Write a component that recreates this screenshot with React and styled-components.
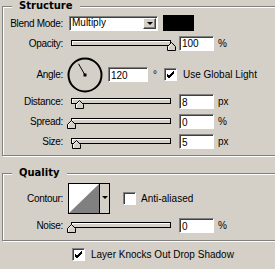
import React from "react";
import styled, { createGlobalStyle } from "styled-components";

const GlobalStyle = createGlobalStyle`
  html, body {
    margin: 0;
    padding: 0;
    overflow: hidden;
    background: #d4d0c8;
  }
  body {
    font-family: "Liberation Sans", Arial, sans-serif;
    font-size: 10px;
    color: #000;
  }
`;

const Panel = styled.div`
  width: 310px;
  display: flex;
  flex-direction: column;
`;

const Group = styled.fieldset`
  margin: ${(p) => p.$mt || 0}px 0 0 2px;
  padding: ${(p) => p.$pt}px 0 ${(p) => p.$pb}px 0;
  border: 1px solid #808080;
  box-shadow: 1px 1px 0 #fff, inset 1px 1px 0 #fff;
  min-width: 0;
`;

const Legend = styled.legend`
  margin-left: 9px;
  padding: 0 7px;
  font-family: "DejaVu Sans", sans-serif;
  font-weight: bold;
  font-size: 10px;
  line-height: 12px;
  background: #d4d0c8;
`;

const Row = styled.div`
  display: flex;
  align-items: center;
  height: ${(p) => p.$h}px;
  margin-top: ${(p) => p.$mt || 0}px;
  padding-left: ${(p) => p.$pl || 0}px;
`;

const Label = styled.span`
  flex: none;
  width: 60px;
  text-align: right;
  letter-spacing: -0.3px;
  margin-right: ${(p) => p.$gap ?? 6}px;
  white-space: nowrap;
`;

const Select = styled.div`
  position: relative;
  width: 89px;
  height: 15px;
  box-sizing: border-box;
  background: #fff;
  border-top: 1px solid #808080;
  border-left: 1px solid #808080;
  border-bottom: 1px solid #fff;
  border-right: 1px solid #fff;
  box-shadow: inset 1px 1px 0 #404040;
  display: flex;
  align-items: center;
  padding-left: 2px;
`;

const SelectText = styled.span`
  flex: 1;
  line-height: 12px;
`;

const DropButton = styled.div`
  width: 13px;
  height: 11px;
  box-sizing: border-box;
  margin-right: 1px;
  background: #d4d0c8;
  border-top: 1px solid #fff;
  border-left: 1px solid #fff;
  border-right: 1px solid #404040;
  border-bottom: 1px solid #404040;
  box-shadow: inset -1px -1px 0 #808080;
  display: flex;
  align-items: center;
  justify-content: center;
`;

const Arrow = styled.span`
  width: 0;
  height: 0;
  border-left: 3px solid transparent;
  border-right: 3px solid transparent;
  border-top: 3px solid #000;
`;

const Swatch = styled.div`
  width: 31px;
  height: 16px;
  margin-left: 5px;
  background: #000;
`;

const SliderBox = styled.div`
  position: relative;
  flex: none;
  width: 110px;
  height: 15px;
  margin-right: 2px;
  padding-top: 4px;
  box-sizing: border-box;
`;

const Track = styled.div`
  width: 100px;
  height: 6px;
  margin-left: 4px;
  box-sizing: border-box;
  border: 1px solid #000;
  background: #d4d0c8;
  box-shadow: inset 1px 1px 0 #fff;
`;

const Thumb = styled.svg`
  position: absolute;
  top: 6px;
  width: 9px;
  height: 9px;
`;

const NumInput = styled.input`
  width: ${(p) => p.$w || 35}px;
  height: 15px;
  box-sizing: border-box;
  margin: 0;
  padding: 1px 0 0 2px;
  background: #fff;
  border-top: 1px solid #808080;
  border-left: 1px solid #808080;
  border-bottom: 1px solid #fff;
  border-right: 1px solid #fff;
  box-shadow: inset 1px 1px 0 #404040;
  font-family: "Liberation Sans", Arial, sans-serif;
  font-size: 10px;
  line-height: 12px;
  color: #000;
  outline: none;
`;

const Unit = styled.span`
  margin-left: ${(p) => p.$ml ?? 4}px;
`;

const Box = styled.div`
  flex: none;
  width: 13px;
  height: 13px;
  box-sizing: border-box;
  margin-left: ${(p) => p.$ml || 0}px;
  background: #fff;
  border-top: 1px solid #808080;
  border-left: 1px solid #808080;
  border-bottom: 1px solid #fff;
  border-right: 1px solid #fff;
  box-shadow: inset 1px 1px 0 #404040;
  display: flex;
  align-items: center;
  justify-content: center;
`;

const BoxText = styled.span`
  margin-left: ${(p) => p.$ml ?? 6}px;
  white-space: nowrap;
`;

const Dial = styled.svg`
  flex: none;
  width: 36px;
  height: 36px;
  margin-right: 5px;
`;

const Contour = styled.div`
  flex: none;
  display: flex;
  width: 42px;
  height: 31px;
  box-sizing: border-box;
  border: 1px solid #000;
`;

const ContourCurve = styled.svg`
  width: 30px;
  height: 29px;
  display: block;
`;

const ContourDrop = styled.div`
  flex: 1;
  border-left: 1px solid #000;
  background: #d4d0c8;
  display: flex;
  justify-content: center;
  padding-top: 12px;
  box-sizing: border-box;
`;

function Check() {
  return (
    <svg width="9" height="9" viewBox="0 0 9 9">
      <path d="M1 4 L3 6 L8 1 M1 5 L3 7 L8 2 M1 6 L3 8 L8 3" stroke="#000" strokeWidth="1" fill="none" shapeRendering="crispEdges" />
    </svg>
  );
}

function Slider({ value }) {
  return (
    <SliderBox>
      <Track />
      <Thumb viewBox="0 0 9 9" style={{ left: value }}>
        <path d="M0.5 8.5 V4.5 L4.5 0.5 L8.5 4.5 V8.5 Z" fill="#d4d0c8" stroke="#000" />
        <path d="M1.5 7.5 V4.8 L4.5 1.8" fill="none" stroke="#fff" />
      </Thumb>
    </SliderBox>
  );
}

function SliderRow({ label, value, text, unit, mt, h = 15 }) {
  return (
    <Row $h={h} $mt={mt}>
      <Label $gap={4}>{label}</Label>
      <Slider value={value} />
      <NumInput readOnly value={text} />
      <Unit>{unit}</Unit>
    </Row>
  );
}

export default function App() {
  const angle = 120;
  const rad = (angle * Math.PI) / 180;
  const nx = 18 + Math.cos(rad) * 13;
  const ny = 18 - Math.sin(rad) * 13;

  return (
    <>
      <GlobalStyle />
      <Panel>
        <Group $pt={2} $pb={6}>
          <Legend>Structure</Legend>
          <Row $h={16} $mt={1}>
            <Label>Blend Mode:</Label>
            <Select>
              <SelectText>Multiply</SelectText>
              <DropButton>
                <Arrow />
              </DropButton>
            </Select>
            <Swatch />
          </Row>
          <SliderRow label="Opacity:" value={100} text="100" unit="%" mt={5} h={14} />
          <Row $h={35} $mt={7}>
            <Label $gap={4}>Angle:</Label>
            <Dial viewBox="0 0 36 36">
              <circle cx="18" cy="18" r="16.5" fill="none" stroke="#000" strokeWidth="2" />
              <line x1="18" y1="18" x2={nx} y2={ny} stroke="#000" strokeWidth="1" />
              <rect x="16.5" y="16.5" width="3" height="3" fill="#000" />
            </Dial>
            <NumInput readOnly value="120" $w={40} />
            <Unit $ml={5}>°</Unit>
            <Box $ml={7}>
              <Check />
            </Box>
            <BoxText>Use Global Light</BoxText>
          </Row>
          <SliderRow label="Distance:" value={8} text="8" unit="px" mt={2} />
          <SliderRow label="Spread:" value={0} text="0" unit="%" mt={5} />
          <SliderRow label="Size:" value={5} text="5" unit="px" mt={5} />
        </Group>

        <Group $mt={11} $pt={4} $pb={7}>
          <Legend>Quality</Legend>
          <Row $h={31}>
            <Label $gap={5}>Contour:</Label>
            <Contour>
              <ContourCurve viewBox="0 0 30 29">
                <rect width="30" height="29" fill="#fff" />
                <polygon points="0,29 30,0 30,29" fill="#808080" />
              </ContourCurve>
              <ContourDrop>
                <Arrow />
              </ContourDrop>
            </Contour>
            <Box $ml={13} />
            <BoxText $ml={5}>Anti-aliased</BoxText>
          </Row>
          <SliderRow label="Noise:" value={0} text="0" unit="%" mt={4} />
        </Group>

        <Row $h={13} $mt={7} $pl={72}>
          <Box>
            <Check />
          </Box>
          <BoxText>Layer Knocks Out Drop Shadow</BoxText>
        </Row>
      </Panel>
    </>
  );
}
